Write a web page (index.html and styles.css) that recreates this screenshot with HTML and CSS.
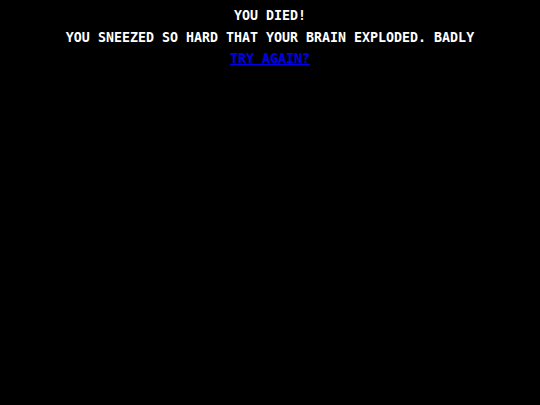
FILE: index.html
```html
<!DOCTYPE html>
<html>
<head>
<meta charset="utf-8">
<link rel="stylesheet" href="styles.css">
</head>
<body>
<main class="death">
  <div class="line">YOU DIED!</div>
  <div class="line">YOU SNEEZED SO HARD THAT YOUR BRAIN EXPLODED. BADLY</div>
  <div class="line"><a class="retry" href="#">TRY AGAIN?</a></div>
</main>
</body>
</html>
```
FILE: styles.css
```css
html, body {
  margin: 0;
  background: #000;
}
.death {
  padding-top: 5px;
  display: flex;
  flex-direction: column;
  align-items: center;
  color: #fff;
  font-family: "DejaVu Sans Mono", "Liberation Mono", monospace;
  font-weight: bold;
  font-size: 13.3px;
}
.line {
  line-height: 21.5px;
  white-space: nowrap;
}
.retry {
  color: #0000ee;
  text-decoration: underline;
}
```
